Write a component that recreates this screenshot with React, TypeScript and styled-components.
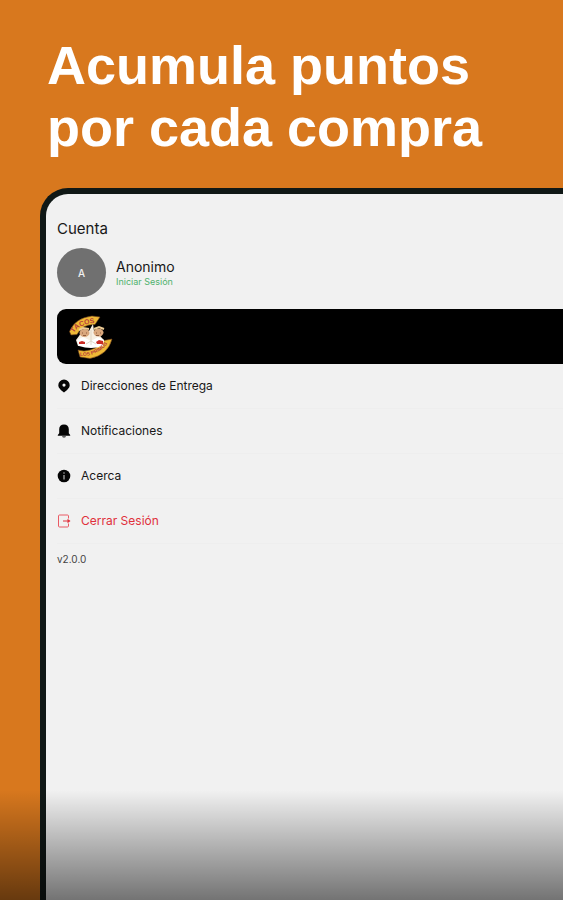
import React from "react";
import styled, { createGlobalStyle } from "styled-components";

const GlobalStyle = createGlobalStyle`
  *, *::before, *::after { box-sizing: border-box; }
  body { margin: 0; background: #d8781e; }
  button { font: inherit; color: inherit; background: none; border: 0; padding: 0; cursor: pointer; text-align: left; }
`;

const Page = styled.div`
  position: relative;
  display: flex;
  flex-direction: column;
  min-height: 100vh;
  overflow: hidden;
  background: #d8781e;
  font-family: Inter, "Liberation Sans", sans-serif;
`;

const Headline = styled.h1`
  margin: 0;
  padding: 34px 47px 30px;
  color: #fff;
  font: 700 54px/62px "Liberation Sans", Arial, sans-serif;
`;

const Line = styled.span`
  display: block;
  white-space: nowrap;
`;

const Device = styled.main`
  flex: 1;
  display: flex;
  flex-direction: column;
  margin-left: 40px;
  padding: 26px 0 0 11px;
  border: solid #101816;
  border-width: 6px 0 0 6px;
  border-top-left-radius: 28px;
  background: #f1f1f1;
  color: #181818;
`;

const Title = styled.h2`
  margin: 0;
  font-size: 15px;
  line-height: 18px;
  font-weight: 400;
`;

const Profile = styled.section`
  display: flex;
  align-items: center;
  gap: 10px;
  margin-top: 10px;
`;

const Avatar = styled.div`
  display: grid;
  place-items: center;
  width: 49px;
  height: 49px;
  border-radius: 50%;
  background: #707070;
  color: #f1f1f1;
  font-size: 10px;
  font-weight: 500;
`;

const Identity = styled.div`
  display: flex;
  flex-direction: column;
  align-items: flex-start;
  padding-top: 2px;
`;

const Name = styled.span`
  font-size: 14px;
  line-height: 16px;
`;

const SignIn = styled.a`
  color: #4fb26e;
  font-size: 9px;
  line-height: 13px;
  text-decoration: none;
`;

const Banner = styled.section`
  display: flex;
  align-items: center;
  height: 55px;
  margin-top: 12px;
  padding-left: 5px;
  border-radius: 9px 0 0 9px;
  background: #000;
`;

const Menu = styled.nav`
  display: flex;
  flex-direction: column;
`;

const MenuItem = styled.button<{ $danger?: boolean }>`
  display: flex;
  align-items: center;
  gap: 10px;
  height: 45px;
  border-bottom: 1px solid #eeeeee;
  color: ${(p) => (p.$danger ? "#e0303c" : "#181818")};
  font-size: 12px;
  line-height: 16px;

  svg { width: 14px; height: 14px; flex: none; }
`;

const Version = styled.p`
  margin: 9px 0 0;
  color: #444;
  font-size: 10px;
  line-height: 12px;
`;

const Shade = styled.div`
  position: absolute;
  inset: auto 0 0;
  height: 110px;
  background: linear-gradient(rgba(0, 0, 0, 0), rgba(0, 0, 0, 0.52));
  pointer-events: none;
`;

const PinIcon = () => (
  <svg viewBox="0 0 14 14" aria-hidden="true">
    <path fill="#050505" fillRule="evenodd" d="M7 .5a5.700 5.700 0 0 0-5.700 5.700c0 3 3.300 5.300 5.700 7.300 2.400-2 5.700-4.300 5.700-7.300A5.700 5.700 0 0 0 7 .5Zm0 4a1.600 1.600 0 1 1 0 3.200 1.600 1.600 0 0 1 0-3.200Z" />
  </svg>
);

const BellIcon = () => (
  <svg viewBox="0 0 14 14" aria-hidden="true">
    <path fill="#050505" d="M7 .5C4 .5 2.200 2.300 2.200 5.200v4L.8 11v.7h12.400V11l-1.400-1.800v-4C11.800 2.300 10 .5 7 .5Z" />
    <path fill="#333" d="M5 12.200h4c-.2.800-.9 1.300-2 1.300s-1.800-.5-2-1.300Z" />
  </svg>
);

const InfoIcon = () => (
  <svg viewBox="0 0 14 14" aria-hidden="true">
    <circle cx="7" cy="7" r="6.300" fill="#050505" />
    <path d="M7 6v4.500" stroke="#aaa" strokeWidth="1.300" />
    <circle cx="7" cy="4" r=".8" fill="#aaa" />
  </svg>
);

const ExitIcon = () => (
  <svg viewBox="0 0 14 14" aria-hidden="true">
    <path d="M11.500 4.500V2c0-.6-.4-1-1-1h-8c-.6 0-1 .4-1 1v10c0 .6.400 1 1 1h8c.6 0 1-.4 1-1V9.500" fill="none" stroke="#ea5a64" />
    <path d="M6 7h5" stroke="#e0303c" />
    <path d="m10.500 4.800 3 2.200-3 2.200Z" fill="#e0303c" />
  </svg>
);

const BrandLogo = () => (
  <svg width="56" height="52" viewBox="0 0 56 52" role="img" aria-label="Tacos Los Primos">
    <defs>
      <path id="brand-top" d="M12 22Q17 12.500 37 11.500" />
      <path id="brand-bottom" d="M18 45Q35 46 47 31" />
    </defs>
    <path d="M7.500 20.500Q13 7 30 5l8 1-5 7.500Q20 13 15 23.500l-6 .5Z" fill="#efb936" stroke="#70401c" strokeWidth=".6" />
    <path d="m16 39 6 1Q35 39 42 29.500l8-1.500Q46 44 28 47.500l-10-1.500Z" fill="#efb936" stroke="#70401c" strokeWidth=".6" />
    <path d="m27 20 4-7 1 7 4 1 3 5 3 3-2 6H16l-2-6 3-4 3-5 5-1Z" fill="#f7efe2" />
    <ellipse cx="22.500" cy="22" rx="5" ry="4" fill="#d9a77d" />
    <ellipse cx="36.500" cy="21.500" rx="5" ry="4" fill="#d9a77d" />
    <path d="m17 19 4-2 6 1M32 18l5-2 5 2" fill="none" stroke="#edcc96" strokeWidth="2" />
    <path d="M20 22h1m3 0h1m9 0h1m3 0h1M21 24.500h3m10 0h3" stroke="#7b482c" strokeWidth=".8" />
    <path d="m15 29 6-3 8 4 7-4 6 3-1 6q-12 4-24 0Z" fill="#fff" />
    <path d="m17 31 3-1 3 1v2h-6Zm17 0 3-2 4 1v3h-6Z" fill="#ca2b24" />
    <path d="M29 19v15m-5-1 5-3 5 3" fill="none" stroke="#d9d0c0" strokeWidth=".8" />
    <g fill="#b53d3b" fontFamily="Liberation Sans, sans-serif" fontWeight="700">
      <text fontSize="7"><textPath href="#brand-top">TACOS</textPath></text>
      <text fontSize="5"><textPath href="#brand-bottom">LOS PRIMOS</textPath></text>
    </g>
  </svg>
);

export default function App() {
  return (
    <>
      <GlobalStyle />
      <Page>
        <Headline>
          <Line>Acumula puntos</Line>
          <Line>por cada compra</Line>
        </Headline>
        <Device>
          <Title>Cuenta</Title>
          <Profile>
            <Avatar>A</Avatar>
            <Identity>
              <Name>Anonimo</Name>
              <SignIn href="#">Iniciar Sesión</SignIn>
            </Identity>
          </Profile>
          <Banner><BrandLogo /></Banner>
          <Menu>
            <MenuItem><PinIcon />Direcciones de Entrega</MenuItem>
            <MenuItem><BellIcon />Notificaciones</MenuItem>
            <MenuItem><InfoIcon />Acerca</MenuItem>
            <MenuItem $danger><ExitIcon />Cerrar Sesión</MenuItem>
          </Menu>
          <Version>v2.0.0</Version>
        </Device>
        <Shade />
      </Page>
    </>
  );
}
